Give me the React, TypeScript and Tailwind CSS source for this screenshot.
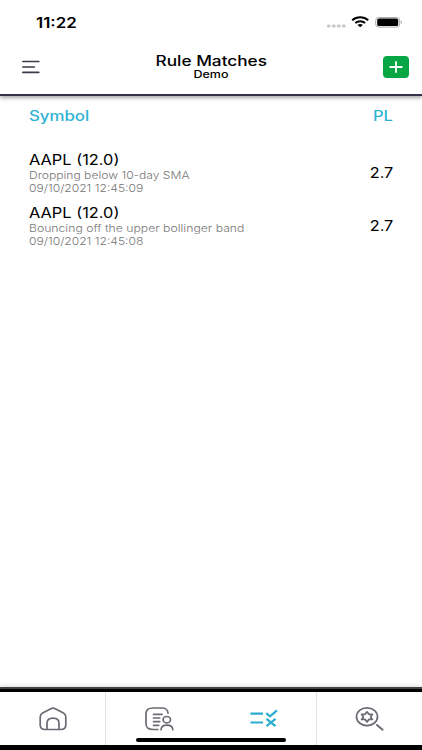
import React from "react";

const rows = [
  { symbol: "AAPL (12.0)", rule: "Dropping below 10-day SMA", ruleClass: "scale-x-[1.15]", time: "09/10/2021 12:45:09", pl: "2.7" },
  { symbol: "AAPL (12.0)", rule: "Bouncing off the upper bollinger band", ruleClass: "scale-x-[1.163]", time: "09/10/2021 12:45:08", pl: "2.7" },
];

function StatusBar() {
  return (
    <div className="flex h-11 items-center pl-9 pr-[20px]">
      <span className="mt-[2px] origin-left scale-x-[1.21] text-[14px] font-semibold leading-5 text-black">11:22</span>
      <svg className="ml-auto" width="76" height="16" viewBox="0 0 76 16">
        <g fill="#c7c7c9">
          <rect x="1" y="10.500" width="3.600" height="3" rx="1.300" />
          <rect x="6" y="10.500" width="3.600" height="3" rx="1.300" />
          <rect x="11" y="10.500" width="3.600" height="3" rx="1.300" />
          <rect x="16" y="10.500" width="3.600" height="3" rx="1.300" />
        </g>
        <g fill="none" stroke="#000" strokeWidth="2">
          <path d="M26.200 6.200c4.500-4.100 11.500-4.100 16 0" />
          <path d="M29.300 9c2.800-2.500 7-2.500 9.800 0" />
        </g>
        <path d="M31.500 11c1.500-1.300 3.900-1.300 5.400 0l-2.700 2.300z" fill="#000" />
        <rect x="49.700" y="3.500" width="24" height="9.600" rx="3" fill="none" stroke="#aaa" />
        <rect x="51.200" y="4.500" width="21" height="7.600" rx="1.700" />
        <path d="M74.800 6.800c1.400.4 1.400 2.600 0 3z" fill="#999" />
      </svg>
    </div>
  );
}

export default function App() {
  return (
    <div className="flex h-[750px] w-[422px] flex-col overflow-hidden bg-white font-['Inter',sans-serif] text-black">
      <header className="relative h-[96px] shrink-0 border-b-2 border-[#34324a] bg-white shadow-[0_2px_4px_rgba(0,0,0,0.35)]">
        <StatusBar />
        <div className="grid h-[46px] grid-cols-[60px_1fr_60px] items-center">
          <svg className="ml-[22px]" width="26" height="14" viewBox="0 0 26 14" stroke="#3b3a47" strokeWidth="1.700" strokeLinecap="round">
            <path d="M.8 1.500h16M.8 7h11.500M.8 12.300h16" />
          </svg>
          <div className="flex flex-col items-center">
            <h1 className="scale-x-[1.23] whitespace-nowrap text-[14px] font-medium leading-[14px]">Rule Matches</h1>
            <p className="scale-x-[1.25] text-[10px] font-medium leading-[12px]">Demo</p>
          </div>
          <button aria-label="Add" className="mr-[13px] flex h-[22px] w-[26px] items-center justify-center justify-self-end rounded bg-[#08a545]">
            <svg width="14" height="12" viewBox="0 0 14 12" stroke="#fff" strokeWidth="1.800" strokeLinecap="round">
              <path d="M1.200 6h11.600M7 1v10" />
            </svg>
          </button>
        </div>
      </header>

      <main className="flex-1 pl-[28.500px] pr-[29px]">
        <div className="flex h-[38px] items-center justify-between text-[14px] font-medium text-[#2eb3d4]">
          <span className="origin-left scale-x-[1.2]">Symbol</span>
          <span className="origin-right scale-x-[1.18]">PL</span>
        </div>
        <div className="pt-4">
          {rows.map((row) => (
            <div key={row.time} className="flex h-[52.600px] items-start justify-between">
              <div className="flex flex-col items-start whitespace-nowrap">
                <span className="origin-left scale-x-[1.17] text-[14px] leading-[19px]">{row.symbol}</span>
                <span className={"origin-left text-[10.500px] font-light leading-[13px] text-[#777] " + row.ruleClass}>{row.rule}</span>
                <span className="origin-left scale-x-[1.15] text-[10.500px] font-light leading-[13px] text-[#777]">{row.time}</span>
              </div>
              <span className="origin-right scale-x-[1.16] text-[14px] leading-[46px]">{row.pl}</span>
            </div>
          ))}
        </div>
      </main>

      <nav className="relative flex h-[63px] shrink-0 border-b-[5px] border-t-[5px] border-black bg-white shadow-[0_-1px_4px_rgba(0,0,0,0.15)]">
        <span className="absolute -top-[5px] left-0 h-[2px] w-full bg-[#41434b]" />
        <a className="flex w-[106px] items-center justify-center border-r border-[#e2e2e2] pl-px">
          <svg width="30" height="26" viewBox="0 0 30 26" fill="none" stroke="#6b6a72" strokeWidth="1.700" strokeLinejoin="round">
            <path d="M12.700 2.800 4.600 7.100Q2.200 8.400 2.200 11v8q0 4.500 5 4.500h15.600q5 0 5-4.500v-8q0-2.600-2.400-3.900l-8.100-4.300q-2.300-1.200-4.600 0Z" />
            <path d="M9 23.500v-6q0-5.300 6-5.300t6 5.300v6" />
          </svg>
        </a>
        <a className="flex w-[105px] items-center justify-center">
          <svg width="30" height="26" viewBox="0 0 30 26" fill="none" stroke="#6b6a72" strokeWidth="1.700" strokeLinecap="round">
            <path d="M24 7.200C23.700 3.200 22 2 17.500 2H9.500C4 2 2 3.600 2 8v9.500c0 4.400 2 6 7.500 6h4.300" />
            <path d="M9.500 8.300h8.500M9.500 12h6.200M9.500 15.600h6.200M9.500 19.300h5.200" />
            <ellipse cx="22.800" cy="13.700" rx="3.700" ry="3.200" />
            <path d="M17 23.700c.5-6 11.400-6 11.800 0" />
          </svg>
        </a>
        <a className="flex w-[106px] items-center justify-center border-r border-[#e2e2e2] pb-px">
          <svg width="30" height="26" viewBox="0 0 30 26" fill="none" stroke="#2badd0" strokeWidth="2.200">
            <path d="M1.500 8.600h12.500M1.500 17.500h12.500" />
            <path d="m17.200 8.200 3.800 3.100 7-6M17.500 13.800l9 7.400M26.500 13.800l-9 7.400" />
          </svg>
        </a>
        <a className="flex w-[105px] items-center justify-center">
          <svg width="30" height="26" viewBox="0 0 30 26" fill="none" stroke="#6b6a72" strokeWidth="1.700" strokeLinejoin="round">
            <ellipse cx="12" cy="10.700" rx="10.500" ry="8.900" />
            <path d="m12 5.900 2 2.400h3.400L15.700 10.900l1.700 2.500h-3.400l-2 2.500-2-2.500H6.600l1.700-2.500-1.700-2.600h3.400z" />
            <path d="m22 19 5.600 4.700" strokeWidth="2" strokeLinecap="round" />
          </svg>
        </a>
        <span className="absolute left-[136px] top-[46px] h-[4px] w-[150px] rounded-full bg-black" />
      </nav>
    </div>
  );
}
